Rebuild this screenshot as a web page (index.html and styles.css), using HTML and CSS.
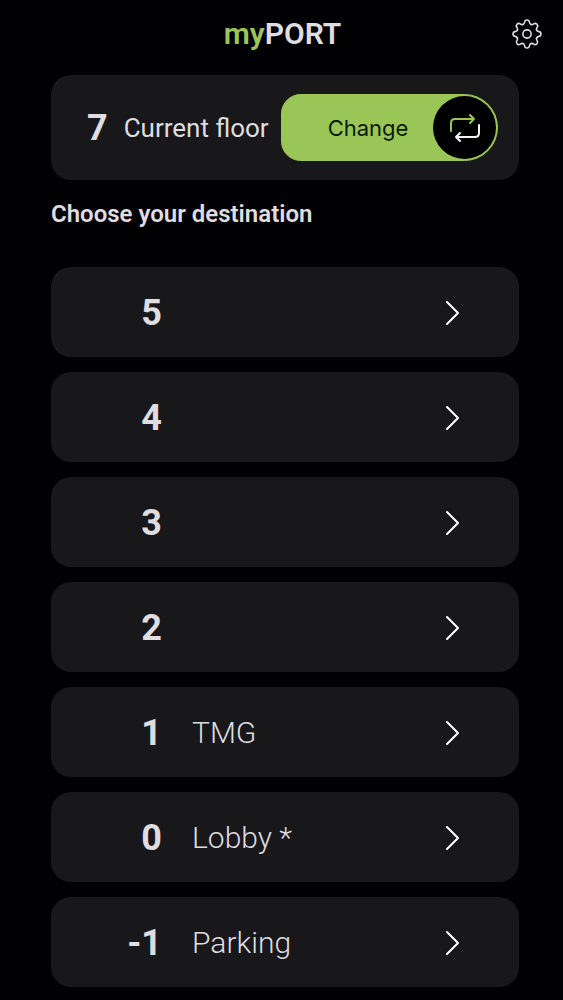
FILE: index.html
```html
<!DOCTYPE html>
<html lang="en">
<head>
<meta charset="utf-8">
<meta name="viewport" content="width=device-width, initial-scale=1">
<title>myPORT</title>
<link rel="stylesheet" href="styles.css">
</head>
<body>
<svg class="defs" aria-hidden="true">
  <symbol id="chevron" viewBox="0 0 16 26"><path d="M2 2 13 13 2 24" fill="none" stroke="currentColor" stroke-width="2" stroke-linecap="round" stroke-linejoin="round"/></symbol>
</svg>
<header class="topbar">
  <h1 class="brand"><span class="brand-accent">my</span>PORT</h1>
  <button class="settings" type="button" aria-label="Settings">
    <svg class="settings-icon" viewBox="-16 -16 32 32" fill="none" stroke="currentColor" stroke-width="1.6" stroke-linecap="round" stroke-linejoin="round">
      <circle r="4.1"/>
      <g id="tooth"><path d="M-4-9.6C-2.9-10-2.6-10.7-2.4-12C-2-14.6 2-14.6 2.4-12C2.6-10.7 2.9-10 4-9.6"/></g>
      <use href="#tooth" transform="rotate(45)"/>
      <use href="#tooth" transform="rotate(90)"/>
      <use href="#tooth" transform="rotate(135)"/>
      <use href="#tooth" transform="rotate(180)"/>
      <use href="#tooth" transform="rotate(225)"/>
      <use href="#tooth" transform="rotate(270)"/>
      <use href="#tooth" transform="rotate(315)"/>
    </svg>
  </button>
</header>
<main class="content">
  <section class="current">
    <span class="floor-number">7</span>
    <span class="current-label">Current floor</span>
    <button class="change" type="button">
      <span class="change-label">Change</span>
      <span class="change-knob">
        <svg class="swap-icon" viewBox="0 0 32 30" fill="none" stroke-width="2" stroke-linecap="round" stroke-linejoin="round">
          <path class="swap-out" d="M2 18V10Q2 6 6 6H25M21 2 25 6 21 10"/>
          <path class="swap-back" d="M30 12V20Q30 24 26 24H7M11 20 7 24 11 28"/>
        </svg>
      </span>
    </button>
  </section>
  <h2 class="heading">Choose your destination</h2>
  <nav class="floors" aria-label="Destinations">
    <button class="floor" type="button"><span class="floor-number">5</span><span class="floor-name"></span><svg class="chevron"><use href="#chevron"/></svg></button>
    <button class="floor" type="button"><span class="floor-number">4</span><span class="floor-name"></span><svg class="chevron"><use href="#chevron"/></svg></button>
    <button class="floor" type="button"><span class="floor-number">3</span><span class="floor-name"></span><svg class="chevron"><use href="#chevron"/></svg></button>
    <button class="floor" type="button"><span class="floor-number">2</span><span class="floor-name"></span><svg class="chevron"><use href="#chevron"/></svg></button>
    <button class="floor" type="button"><span class="floor-number">1</span><span class="floor-name">TMG</span><svg class="chevron"><use href="#chevron"/></svg></button>
    <button class="floor" type="button"><span class="floor-number">0</span><span class="floor-name">Lobby *</span><svg class="chevron"><use href="#chevron"/></svg></button>
    <button class="floor" type="button"><span class="floor-number">-1</span><span class="floor-name">Parking</span><svg class="chevron"><use href="#chevron"/></svg></button>
  </nav>
</main>
</body>
</html>
```
FILE: styles.css
```css
* { box-sizing: border-box; }

body {
  margin: 0;
  background: #010002;
  color: #dfdde0;
  font-family: Roboto, "Liberation Sans", sans-serif;
}

button {
  margin: 0;
  padding: 0;
  border: 0;
  background: none;
  color: inherit;
  font: inherit;
  cursor: pointer;
}

.defs { display: none; }

.topbar {
  display: grid;
  grid-template-columns: 1fr auto 1fr;
  align-items: center;
  height: 68px;
  padding: 0 20px 0 22px;
}

.brand {
  grid-column: 2;
  margin: 0;
  font-size: 30px;
  line-height: 36px;
  font-weight: 600;
}

.brand-accent { color: #9ac658; }

.settings {
  justify-self: end;
  width: 32px;
  height: 32px;
}

.settings-icon {
  display: block;
  width: 32px;
  height: 32px;
}

.content { padding: 7px 44px 13px 51px; }

.current {
  display: flex;
  align-items: center;
  height: 105px;
  padding: 0 21px 0 36px;
  border-radius: 20px;
  background: #18171a;
}

.floor-number {
  font-size: 36px;
  line-height: 42px;
  font-weight: 700;
}

.current-label {
  margin-left: 16px;
  font-size: 26px;
  line-height: 32px;
  white-space: nowrap;
}

.change {
  display: flex;
  align-items: center;
  width: 217px;
  height: 67px;
  margin-left: auto;
  padding-right: 1px;
  border: 1px solid #9ac658;
  border-radius: 20px 34px 34px 20px;
  background: #9ac658;
  color: #0b1a08;
}

.change-label {
  flex: 1;
  padding-left: 21px;
  font-family: Inter, "Liberation Sans", sans-serif;
  font-size: 22px;
  line-height: 28px;
}

.change-knob {
  display: grid;
  place-items: center;
  width: 63px;
  height: 63px;
  border-radius: 50%;
  background: #000;
}

.swap-icon { width: 32px; height: 30px; }
.swap-out { stroke: #9ac658; }
.swap-back { stroke: #f2f6fa; }

.heading {
  margin: 20px 0 39px;
  font-size: 24px;
  line-height: 28px;
  font-weight: 600;
}

.floors {
  display: grid;
  gap: 15px;
}

.floor {
  display: grid;
  grid-template-columns: 111px 1fr 16px;
  align-items: center;
  column-gap: 30px;
  height: 90px;
  padding: 1px 58px 0 0;
  border-radius: 20px;
  background: #18171a;
  text-align: left;
}

.floor .floor-number { text-align: right; }

.floor-name {
  font-size: 30px;
  line-height: 36px;
  font-weight: 300;
}

.chevron {
  width: 16px;
  height: 26px;
  color: #fff;
}
```
